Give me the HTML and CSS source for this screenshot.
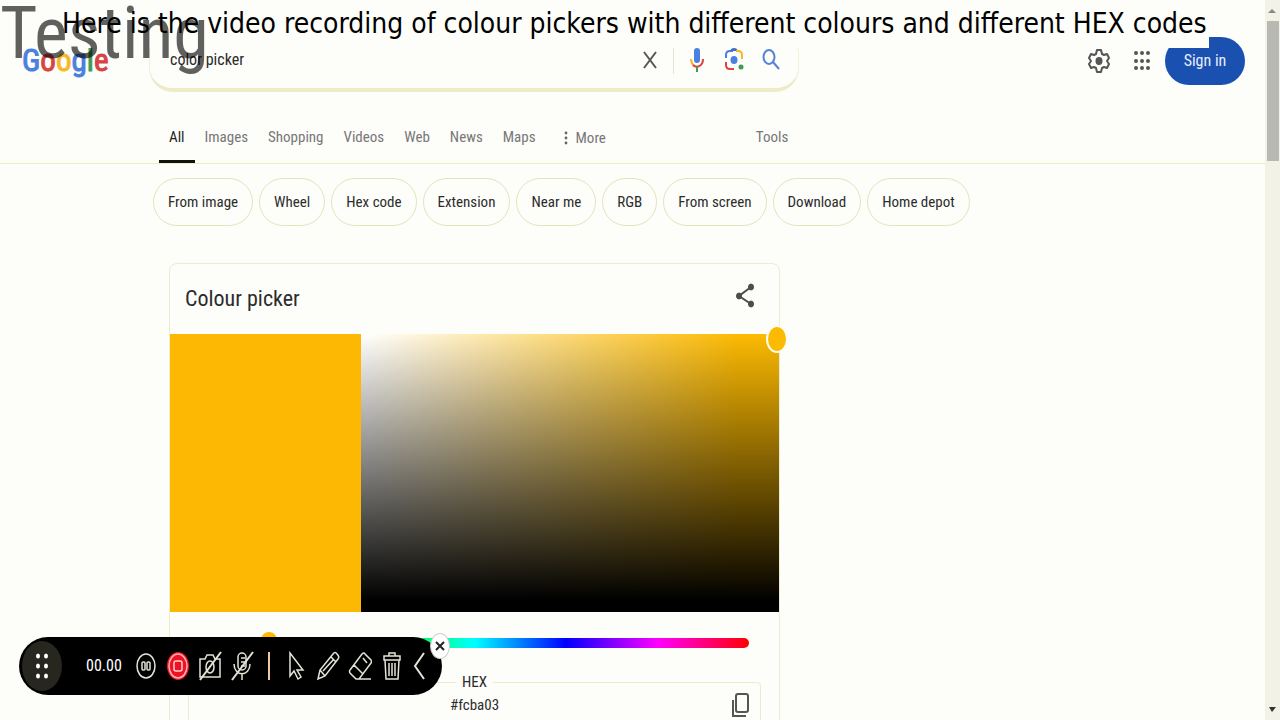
FILE: index.html
```html
<!DOCTYPE html>
<html lang="en">
<head>
<meta charset="utf-8">
<title>color picker - Google Search</title>
<link rel="stylesheet" href="styles.css">
</head>
<body>
<div class="viewport">
  <div class="page">
    <header class="header">
      <a class="logo" href="#" aria-label="Google"><span class="blue">G</span><span class="red">o</span><span class="yellow">o</span><span class="blue">g</span><span class="green">l</span><span class="red">e</span></a>
      <form class="search">
        <input class="search-input" type="text" value="color picker" aria-label="Search">
        <button class="icon-btn" type="button" aria-label="Clear"><svg width="24" height="26" viewBox="0 0 24 26" fill="none" stroke="#555" stroke-width="2"><path d="M6 5l12 16M18 5L6 21"/></svg></button>
        <span class="divider"></span>
        <button class="icon-btn mic" type="button" aria-label="Search by voice"><svg width="24" height="28" viewBox="0 0 24 28" fill="none" stroke-width="2"><rect x="9" y="2" width="6" height="15" rx="3" fill="#4a80e0"/><path d="M6 13c0 4 2 6 3 7" stroke="#f4b92a"/><path d="M8 19c3 3 10 2 10-6" stroke="#d94343"/><path d="M12 21v5" stroke="#3c9d55"/></svg></button>
        <button class="icon-btn lens" type="button" aria-label="Search by image"><svg width="24" height="28" viewBox="0 0 24 28" fill="none" stroke-width="2"><path d="M4 12V9q0-4 4-4h3" stroke="#4a80e0"/><path d="M8 5q1-3 4-3t4 3z" fill="#3d6fc4"/><path d="M14 5h2q4 0 4 4v4" stroke="#f4b92a"/><path d="M4 16v3q0 4 4 4h4" stroke="#d94343"/><ellipse cx="12" cy="14" rx="3.5" ry="4" fill="#4a80e0"/><circle cx="19" cy="21" r="2.5" fill="#3c9d55"/></svg></button>
        <button class="icon-btn" type="submit" aria-label="Google Search"><svg width="24" height="28" viewBox="0 0 24 28" fill="none" stroke="#5383d9" stroke-width="2"><ellipse cx="10" cy="11" rx="5.5" ry="7"/><path d="M14 16l6 7"/></svg></button>
      </form>
      <div class="account">
        <button class="icon-btn" type="button" aria-label="Settings"><svg width="24" height="28" viewBox="0 0 24 28" fill="none" stroke="#555" stroke-width="2"><path d="M10 3h4l1 4 2 1 3-1 2 4-2 3 2 3-2 4-3-1-2 1-1 4h-4l-1-4-2-1-3 1-2-4 2-3-2-3 2-4 3 1 2-1z" stroke-linejoin="round"/><ellipse cx="12" cy="14" rx="3.5" ry="4" fill="#555" stroke="none"/></svg></button>
        <button class="icon-btn apps" type="button" aria-label="Google apps"><svg width="24" height="28" viewBox="0 0 24 28" fill="#555"><g id="r"><circle cx="6" cy="6" r="2"/><circle cx="12" cy="6" r="2"/><circle cx="18" cy="6" r="2"/></g><use href="#r" y="8"/><use href="#r" y="15"/></svg></button>
        <button class="sign-in" type="button">Sign in</button>
      </div>
    </header>

    <nav class="tabs" aria-label="Search types">
      <a class="tab active" href="#">All</a>
      <a class="tab" href="#">Images</a>
      <a class="tab" href="#">Shopping</a>
      <a class="tab" href="#">Videos</a>
      <a class="tab" href="#">Web</a>
      <a class="tab" href="#">News</a>
      <a class="tab" href="#">Maps</a>
      <button class="tab more" type="button"><svg width="4" height="14" viewBox="0 0 4 14" fill="#666"><circle cx="2" cy="2" r="1.4"/><circle cx="2" cy="7" r="1.4"/><circle cx="2" cy="12" r="1.4"/></svg>More</button>
      <button class="tab tools" type="button">Tools</button>
    </nav>

    <div class="chips">
      <a class="chip" href="#">From image</a>
      <a class="chip" href="#">Wheel</a>
      <a class="chip" href="#">Hex code</a>
      <a class="chip" href="#">Extension</a>
      <a class="chip" href="#">Near me</a>
      <a class="chip" href="#">RGB</a>
      <a class="chip" href="#">From screen</a>
      <a class="chip" href="#">Download</a>
      <a class="chip" href="#">Home depot</a>
    </div>

    <main class="card">
      <div class="card-head">
        <h1 class="card-title">Colour picker</h1>
        <button class="icon-btn share" type="button" aria-label="Share"><svg width="24" height="28" viewBox="0 0 24 28" fill="#4c4c4c" stroke="#4c4c4c"><path d="M18 5L6 14l12 8" fill="none" stroke-width="2"/><ellipse cx="18" cy="5" rx="2.5" ry="3"/><ellipse cx="6" cy="14" rx="2.5" ry="3"/><ellipse cx="18" cy="22" rx="2.5" ry="3"/></svg></button>
      </div>
      <div class="picker">
        <div class="swatch"></div>
        <div class="shade"><span class="handle"></span></div>
      </div>
      <div class="hue-row"><input class="hue" type="range" min="0" max="360" value="41" aria-label="Hue"></div>
      <fieldset class="hex">
        <legend>HEX</legend>
        <input class="hex-input" type="text" value="#fcba03" aria-label="HEX">
        <button class="icon-btn copy" type="button" aria-label="Copy"><svg width="24" height="28" viewBox="0 0 24 28" fill="none" stroke="#555" stroke-width="2"><rect x="8" y="3" width="12" height="18" rx="2"/><path d="M5 9v16h13"/></svg></button>
      </fieldset>
    </main>
  </div>

  <div class="scrollbar" aria-hidden="true">
    <svg width="9" height="21" viewBox="0 0 9 21"><path d="M0 13l4-4 4 4z" fill="#888"/></svg>
    <div class="scroll-thumb"></div>
    <svg class="scroll-down" width="9" height="14" viewBox="0 0 9 14"><path d="M1 1h7L4 6z" fill="#333"/></svg>
  </div>
</div>

<p class="caption">Here is the video recording of colour pickers with different colours and different HEX codes</p>
<p class="watermark">Testing</p>

<div class="recorder">
  <button class="rec-grip" type="button" aria-label="Move"><svg width="14" height="28" viewBox="0 0 14 28" fill="#fff"><g id="d"><ellipse cx="3" cy="4" rx="2" ry="2.5"/><ellipse cx="11" cy="4" rx="2" ry="2.5"/></g><use href="#d" y="10"/><use href="#d" y="20"/></svg></button>
  <span class="rec-time">00.00</span>
  <div class="rec-tools">
    <button type="button" aria-label="Pause"><svg width="24" height="30" viewBox="0 0 24 30"><ellipse cx="12" cy="15" rx="9" ry="12"/><rect x="8" y="11" width="3" height="8" rx="1"/><rect x="13" y="11" width="3" height="8" rx="1"/></svg></button>
    <button type="button" aria-label="Stop"><svg width="24" height="30" viewBox="0 0 24 30"><ellipse cx="12" cy="15" rx="11" ry="14" fill="#ee1124" stroke="none"/><ellipse cx="12" cy="15" rx="9" ry="12" stroke="#ffb4b4"/><rect x="8" y="10" width="8" height="10" rx="2" stroke="#ffd0d0"/></svg></button>
    <button type="button" aria-label="Camera off"><svg width="24" height="30" viewBox="0 0 24 30"><path d="M2 8h5l2-4h6l2 4h5v18H2z"/><ellipse cx="12" cy="16" rx="4" ry="6"/><path d="M2 29L23 1" stroke-width="2"/></svg></button>
    <button type="button" aria-label="Microphone off"><svg width="24" height="30" viewBox="0 0 24 30"><rect x="8" y="2" width="8" height="17" rx="4"/><path d="M4 13c0 13 16 13 16 0M12 23v6M11 7h4M11 11h4M11 15h4"/><path d="M2 29L23 1" stroke-width="2"/></svg></button>
    <span class="rec-sep"></span>
    <button type="button" aria-label="Pointer"><svg width="24" height="30" viewBox="0 0 24 30"><path d="M6 2v23l4-5 4 8 3-2-4-7h6z"/></svg></button>
    <button type="button" aria-label="Pencil"><svg width="24" height="30" viewBox="0 0 24 30"><path d="M2 28l2-9L17 3q2-3 4 0 3 3 1 5L9 25zM4 19l5 6M15 6l5 5M7 20L18 8"/></svg></button>
    <button type="button" aria-label="Eraser"><svg width="24" height="30" viewBox="0 0 24 30"><path d="M2 19L14 3q2-2 3 0l6 6q1 2 0 3L11 28H8l-6-6q-1-2 0-3zM6 14l9 9M15 7l4 5M11 28h12"/></svg></button>
    <button type="button" aria-label="Delete"><svg width="24" height="30" viewBox="0 0 24 30"><path d="M4 5h16v4H4zM9 5V2h6v3M5 9l1 19h12l1-19M9 12v13M12 12v13M15 12v13"/></svg></button>
    <button type="button" aria-label="Collapse"><svg width="16" height="30" viewBox="0 0 16 30"><path d="M12 2L3 15l9 13" stroke-width="2"/></svg></button>
  </div>
  <button class="rec-close" type="button" aria-label="Close"><svg width="10" height="12" viewBox="0 0 10 12" fill="none" stroke="#222" stroke-width="2"><path d="M1 2l8 8M9 2l-8 8"/></svg></button>
</div>
</body>
</html>
```

FILE: styles.css
```css
* { box-sizing: border-box; }

body {
  margin: 0;
  background: #fdfdfa;
  color: #2c2c2c;
  font: 15px/24px "Roboto Condensed", "Liberation Sans Narrow", Roboto, sans-serif;
  overflow: hidden;
}

button, input { font: inherit; color: inherit; }
button { background: none; border: 0; padding: 0; }
a { color: inherit; text-decoration: none; }
svg { display: block; }

.viewport { display: flex; height: 100vh; overflow: hidden; }
.page { flex: 1; min-width: 0; }

.header { display: flex; align-items: center; height: 92px; padding-top: 30px; }
.logo { width: 149px; padding-left: 22px; font-size: 31px; line-height: 40px; -webkit-text-stroke: 1px; }
.blue { color: #4a80e0; }
.red { color: #d94343; }
.yellow { color: #f4b92a; }
.green { color: #3c9d55; }

.search {
  display: flex;
  align-items: center;
  width: 650px;
  height: 62px;
  padding: 0 15px 0 20px;
  border: 1px solid #f0f0d8;
  border-bottom: 4px solid #ececc8;
  border-radius: 24px;
}
.search-input { flex: 1; min-width: 0; border: 0; padding: 0; background: none; font-size: 16px; outline: 0; }
.divider { width: 1px; height: 28px; margin: 0 11px; background: #e4e4d4; }
.search .mic, .search .lens { margin-right: 13px; }
.account { display: flex; align-items: center; margin-left: auto; padding-right: 20px; }
.account .apps { margin: 0 11px 0 19px; }
.sign-in { width: 80px; height: 48px; border-radius: 24px; background: #1a50b0; color: #e8eefc; font-size: 16px; }

.tabs { display: flex; height: 72px; padding: 31px 0 0 159px; border-bottom: 1px solid #f0f0b4; color: #777; }
.tab { display: flex; padding: 2px 10px 0; height: 40px; }
.tab.active { color: #222; border-bottom: 3px solid #111; }
.more { align-items: center; gap: 8px; height: 28px; margin-left: 8px; }
.tools { margin-left: 130px; }

.chips { display: flex; gap: 6px; padding: 14px 0 0 153px; }
.chip { height: 48px; padding: 0 14px; border: 1px solid #e4e4bc; border-radius: 24px; line-height: 46px; white-space: nowrap; }

.card { width: 611px; margin: 37px 0 0 169px; border: 1px solid #ececd0; border-radius: 8px; }
.card-head { display: flex; justify-content: space-between; align-items: center; height: 70px; padding: 0 22px 0 15px; }
.card-title { margin: 0; font-size: 22px; font-weight: 400; }
.share { margin-bottom: 6px; }
.picker { display: flex; height: 278px; }
.swatch { width: 191px; background: #fcb803; }
.shade {
  position: relative;
  flex: 1;
  background: linear-gradient(to bottom, transparent, #000 96%), linear-gradient(to right, #fff, #fcba03 90%);
}
.handle { position: absolute; top: -9px; right: -9px; width: 22px; height: 28px; border: 2px solid #fffef0; border-radius: 50%; background: #fcba03; }

.hue-row { padding: 20px 30px 0; }
.hue { display: block; width: 100%; height: 22px; margin: 0; appearance: none; background: none; }
.hue::-webkit-slider-runnable-track {
  height: 10px;
  border-radius: 5px;
  background: linear-gradient(to right, #f00, #ff0, #0f0, #0ff, #00f, #f0f, #f00);
}
.hue::-webkit-slider-thumb { appearance: none; width: 18px; height: 22px; margin-top: -6px; border-radius: 50%; background: #fcb803; }

.hex { display: flex; align-items: center; height: 80px; margin: 16px 18px 0; padding: 0 8px 34px; border: 1px solid #ececc8; border-radius: 4px; }
.hex legend { margin: 0 auto; padding: 0 6px; }
.hex-input { flex: 1; min-width: 0; padding: 0 0 0 24px; border: 0; background: none; text-align: center; }

.scrollbar { display: flex; flex-direction: column; align-items: center; width: 15px; background: #f2f2e6; }
.scroll-thumb { width: 12px; height: 140px; background: #b9b9b4; }
.scroll-down { margin-top: auto; }

.caption {
  position: absolute;
  top: 0;
  left: 56px;
  margin: 0;
  padding: 0 2px 0 6px;
  background: #fdfdfa;
  color: #000;
  font: 28px/48px "DejaVu Sans Condensed", "DejaVu Sans", sans-serif;
  font-stretch: condensed;
  white-space: nowrap;
}
.watermark { position: absolute; top: -8px; left: 0; margin: 0; color: rgba(0, 0, 0, 0.62); font-size: 72px; line-height: 84px; }

.recorder {
  position: fixed;
  left: 19px;
  bottom: 25px;
  display: flex;
  align-items: center;
  height: 58px;
  padding: 0 14px 0 3px;
  border-radius: 29px;
  background: #000;
  color: #fff;
}
.rec-grip { display: grid; place-items: center; width: 40px; height: 50px; border-radius: 50%; background: #272720; }
.rec-time { margin: 0 12px 0 24px; font-size: 16px; }
.rec-tools { display: flex; align-items: center; gap: 8px; }
.rec-tools svg { fill: none; stroke: #e4e4d8; stroke-width: 1.5; }
.rec-sep { width: 2px; height: 28px; margin: 0 6px; background: #f0c8a0; }
.rec-close { position: absolute; top: -4px; right: -8px; display: grid; place-items: center; width: 20px; height: 26px; border: 1px solid #ccc; border-radius: 50%; background: #fff; }
```
